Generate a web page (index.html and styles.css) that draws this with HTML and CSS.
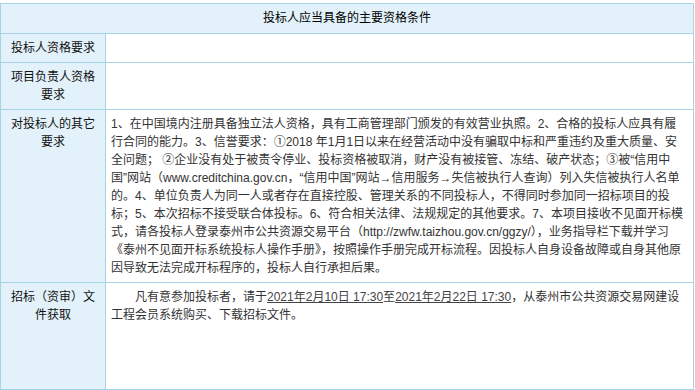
FILE: index.html
```html
<!DOCTYPE html>
<html lang="zh-CN">
<head>
<meta charset="utf-8">
<title>投标人应当具备的主要资格条件</title>
<link rel="stylesheet" href="styles.css">
</head>
<body>
<div class="page">
  <div class="grid">
    <div class="cell head">投标人应当具备的主要资格条件</div>

    <div class="cell label">投标人资格要求</div>
    <div class="cell value"></div>

    <div class="cell label">项目负责人资格要求</div>
    <div class="cell value"></div>

    <div class="cell label">对投标人的其它要求</div>
    <div class="cell value">1、在中国境内注册具备独立法人资格，具有工商管理部门颁发的有效营业执照。2、合格的投标人应具有履<br>行合同的能力。3、信誉要求：①2018 年1月1日以来在经营活动中没有骗取中标和严重违约及重大质量、安<br>全问题； ②企业没有处于被责令停业、投标资格被取消，财产没有被接管、冻结、破产状态；③被“信用中<br>国”网站（www.creditchina.gov.cn，“信用中国”网站→信用服务→失信被执行人查询）列入失信被执行人名单<br>的。4、单位负责人为同一人或者存在直接控股、管理关系的不同投标人，不得同时参加同一招标项目的投<br>标；5、本次招标不接受联合体投标。6、符合相关法律、法规规定的其他要求。7、本项目接收不见面开标模<br>式，请各投标人登录泰州市公共资源交易平台（http://zwfw.taizhou.gov.cn/ggzy/），业务指导栏下载并学习<br>《泰州不见面开标系统投标人操作手册》，按照操作手册完成开标流程。因投标人自身设备故障或自身其他原<br>因导致无法完成开标程序的，投标人自行承担后果。</div>

    <div class="cell label tall">招标（资审）文件获取</div>
    <div class="cell value tall"><p class="indent">凡有意参加投标者，请于<span class="u">2021年2月10日 17:30</span>至<span class="u">2021年2月22日 17:30</span>，从泰州市公共资源交易网建设工程会员系统购买、下载招标文件。</p></div>
  </div>
</div>
</body>
</html>
```

FILE: styles.css
```css
html, body {
  margin: 0;
  padding: 0;
  background: #ffffff;
}

.page {
  padding-top: 3px;
}

.grid {
  display: grid;
  grid-template-columns: 105px 588px;
  width: 694px;
  box-sizing: border-box;
  border-top: 1px solid #a6d4e6;
  border-left: 1px solid #a6d4e6;
  font-family: "Liberation Sans", "Noto Sans CJK SC", sans-serif;
  font-size: 12px;
  line-height: 18px;
}

.cell {
  box-sizing: border-box;
  border-right: 1px solid #a6d4e6;
  border-bottom: 1px solid #a6d4e6;
  padding: 5px;
}

.head {
  grid-column: 1 / span 2;
  background: #e3f1fa;
  color: #000;
  text-align: center;
  padding: 5px 5px 6px;
}

.label {
  background: #e3f1fa;
  color: #111;
  text-align: center;
}

.value {
  background: #ffffff;
  color: #333;
  text-align: left;
  word-break: break-all;
}

.tall {
  height: 107px;
}

.indent {
  margin: 0;
  text-indent: 2em;
}

.u {
  text-decoration: underline;
  color: #444;
}
```
